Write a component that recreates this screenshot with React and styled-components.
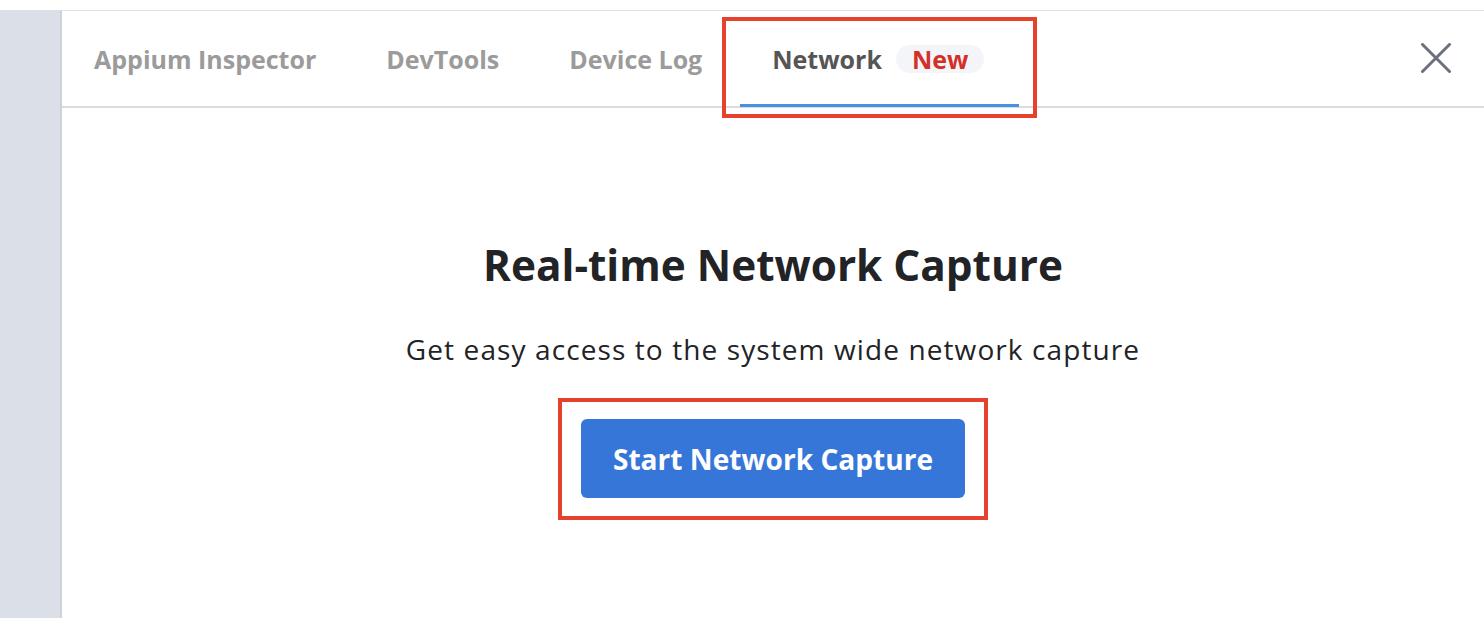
import React from 'react';
import styled, { createGlobalStyle } from 'styled-components';

const GlobalStyle = createGlobalStyle`
  html, body {
    margin: 0;
    padding: 0;
    background: #ffffff;
  }
  body {
    font-family: "Open Sans", Lato, sans-serif;
  }
`

const Page = styled.div`
  width: 1484px;
  height: 618px;
  display: flex;
  flex-direction: column;
  overflow: hidden;
`
const TopGap = styled.div`
  height: 10px;
  flex-shrink: 0;
  border-bottom: 1px solid #dde0e7;
`
const Body = styled.div`
  flex: 1;
  display: flex;
`
const Sidebar = styled.div`
  width: 60px;
  flex-shrink: 0;
  background: #dbdfe7;
  border-right: 2px solid #cdd1da;
`
const Panel = styled.div`
  flex: 1;
  display: flex;
  flex-direction: column;
  background: #fff;
`
const Header = styled.div`
  height: 95px;
  display: flex;
  align-items: stretch;
  border-bottom: 2px solid #dcdcdc;
`
const Tabs = styled.div`
  display: flex;
  flex: 1;
`
const Tab = styled.div`
  position: relative;
  display: flex;
  align-items: center;
  gap: 14px;
  padding: 3px ${props => (props.active ? 35 : 38)}px 0 32px;
  font-size: 25px;
  font-weight: 700;
  color: ${props => (props.active ? '#555555' : '#9b9b9b')};
  border-bottom: 3px solid ${props => (props.active ? '#4a90e2' : 'transparent')};
  margin-bottom: -1px;
`
const Badge = styled.span`
  background: #f3f5f8;
  color: #d3302a;
  border-radius: 14px;
  padding: 0 16px;
  height: 28px;
  display: flex;
  align-items: center;
`
const Annotation = styled.div`
  position: absolute;
  top: ${props => props.t}px;
  left: ${props => props.l}px;
  right: ${props => props.r}px;
  bottom: ${props => props.b}px;
  border: 4px solid #e5412d;
  pointer-events: none;
`
const CloseButton = styled.button`
  border: none;
  background: none;
  padding: 0;
  width: 30px;
  height: 30px;
  margin: 32px 33px 0 0;
  cursor: pointer;
`
const Content = styled.div`
  flex: 1;
  display: flex;
  flex-direction: column;
  align-items: center;
  padding-top: 129px;
  color: #222326;
`
const Title = styled.h1`
  margin: 0;
  font-size: 42.3px;
  font-weight: 700;
  line-height: 56px;
`
const Subtitle = styled.p`
  margin: 39px 0 0;
  font-size: 28px;
  letter-spacing: 1.1px;
  line-height: 34px;
`
const ButtonWrap = styled.div`
  position: relative;
  margin-top: 53px;
`
const StartButton = styled.button`
  width: 384px;
  height: 79px;
  border: none;
  border-radius: 6px;
  background: #3776d9;
  color: #fff;
  font-family: inherit;
  font-size: 28.1px;
  font-weight: 700;
  cursor: pointer;
`

export default function App() {
  return (
    <>
      <GlobalStyle />
      <Page>
        <TopGap />
        <Body>
          <Sidebar />
          <Panel>
            <Header>
              <Tabs>
                <Tab>Appium Inspector</Tab>
                <Tab>DevTools</Tab>
                <Tab>Device Log</Tab>
                <Tab active>
                  Network <Badge>New</Badge>
                  <Annotation t={6} l={-18} r={-18} b={-14} />
                </Tab>
              </Tabs>
              <CloseButton aria-label="Close">
                <svg width="30" height="30" viewBox="0 0 30 30">
                  <path d="M1.5 1.5 L28.5 28.5 M28.5 1.5 L1.5 28.5" stroke="#6b717c" strokeWidth="3" strokeLinecap="round" />
                </svg>
              </CloseButton>
            </Header>
            <Content>
              <Title>Real-time Network Capture</Title>
              <Subtitle>Get easy access to the system wide network capture</Subtitle>
              <ButtonWrap>
                <StartButton>Start Network Capture</StartButton>
                <Annotation t={-21} l={-23} r={-23} b={-22} />
              </ButtonWrap>
            </Content>
          </Panel>
        </Body>
      </Page>
    </>
  );
}
